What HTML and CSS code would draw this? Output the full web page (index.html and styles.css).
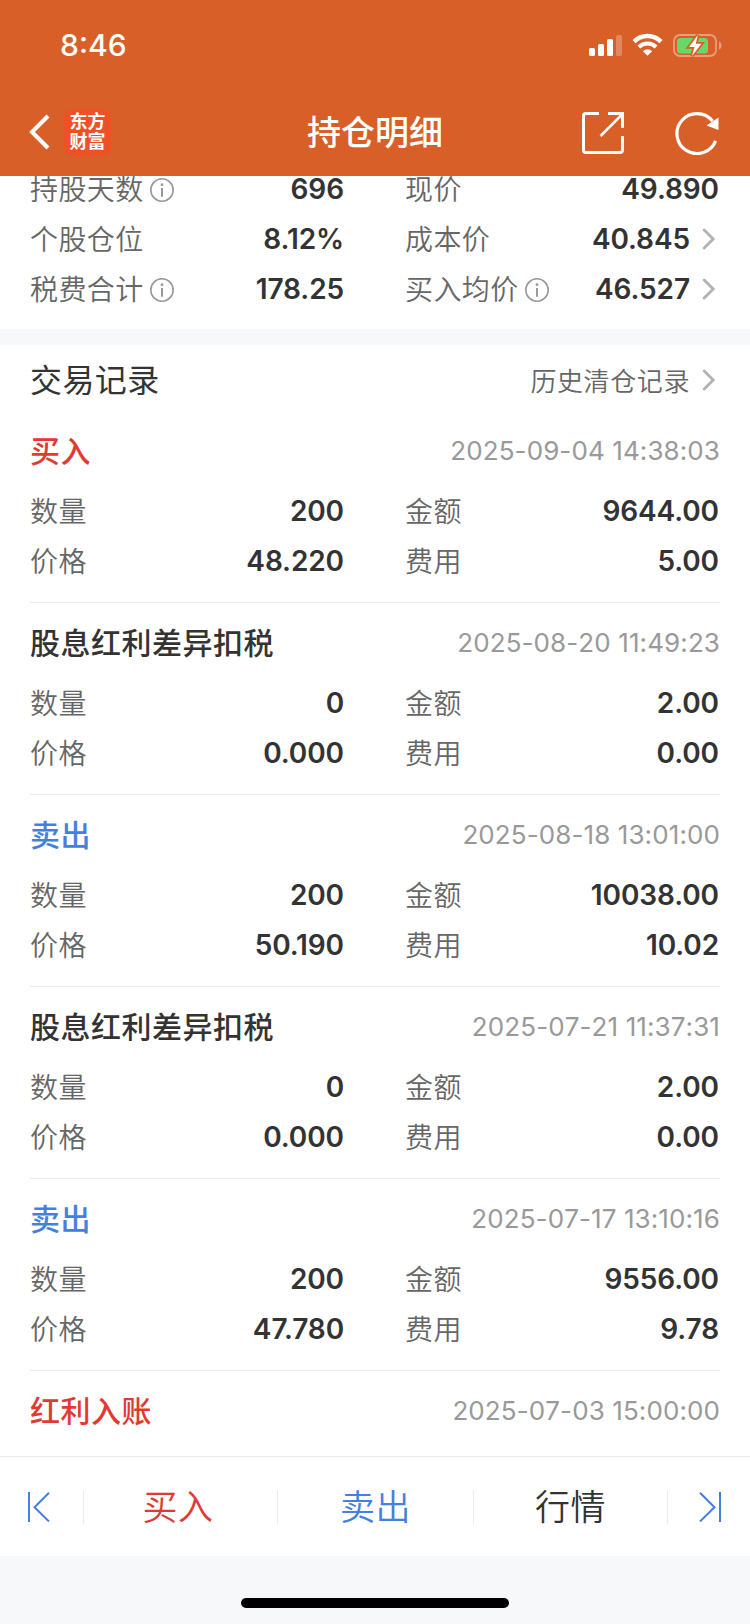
FILE: index.html
```html
<!DOCTYPE html>
<html lang="zh-CN">
<head>
    <meta charset="UTF-8">
    <meta name="viewport" content="width=device-width, initial-scale=1.0">
    <title>持仓明细</title>
    <link rel="stylesheet" href="styles.css">
</head>
<body>
    <svg class="sprite" width="0" height="0">
        <symbol id="info" viewBox="0 0 24 24">
            <circle cx="12" cy="12" r="11.2" fill="none" stroke="#999" stroke-width="1.6"/>
            <path d="M12 10v8.7" stroke="#999" stroke-width="2"/>
            <circle cx="12" cy="6.7" r="1.4" fill="#999"/>
        </symbol>
        <symbol id="arrow" viewBox="0 0 14 22">
            <path d="M2.2 2l9 9-9 9" fill="none" stroke="#b3b3b3" stroke-width="2.9" stroke-linecap="round"/>
        </symbol>
    </svg>

    <header class="header">
        <div class="status">
            <span class="time">8:46</span>
            <svg class="status-icons" width="136" height="26" viewBox="0 0 136 26">
                <g fill="#fff">
                    <rect x="1" y="15" width="6" height="8" rx="1.5"/>
                    <rect x="10" y="11" width="6" height="12" rx="1.5"/>
                    <rect x="19" y="6" width="6" height="17" rx="1.5"/>
                    <rect x="28" y="2" width="6" height="21" rx="1.5" opacity=".25"/>
                </g>
                <g fill="none" stroke="#fff">
                    <path d="M46 8.6a19 19 0 0 1 27 0" stroke-width="4.4"/>
                    <path d="M50.9 14a12.4 12.4 0 0 1 17.2 0" stroke-width="4"/>
                </g>
                <path d="M59.5 22.8l-4.6-4.6a6.7 6.7 0 0 1 9.2 0z" fill="#fff"/>
                <rect x="86" y="2" width="42" height="21" rx="6" fill="none" stroke="#fff" stroke-opacity=".4" stroke-width="1.8"/>
                <path d="M131 8.5c3.3.8 3.3 7.2 0 8z" fill="#fff" opacity=".4"/>
                <rect x="89" y="5" width="31" height="15.5" rx="3.5" fill="#69d86b"/>
                <path d="M109.8 2L101 14h5.500L104 23 113.500 10.800h-5.700z" fill="#fff" stroke="#d85f28" stroke-width="3.500" paint-order="stroke"/>
            </svg>
        </div>
        <div class="navbar">
            <div class="nav-left">
                <svg width="21" height="36" viewBox="0 0 21 36"><path d="M19 2L3 18l16 16" fill="none" stroke="#fff" stroke-width="4"/></svg>
                <div class="app-logo"><span>东方</span><span>财富</span></div>
            </div>
            <h1 class="nav-title">持仓明细</h1>
            <div class="nav-right">
                <svg width="42" height="42" viewBox="0 0 42 42" fill="none" stroke="#fff">
                    <path d="M17 1.5H4Q1.5 1.5 1.5 4V38q0 2.5 2.5 2.5H38q2.500 0 2.500-2.500V24M26 1.500H40.500V16" stroke-width="3"/>
                    <path d="M18.500 24L40 2.500" stroke-width="2.500"/>
                </svg>
                <svg width="44" height="44" viewBox="0 0 44 44">
                    <path d="M40.600 29.800A20 20 0 1 1 37.500 10" fill="none" stroke="#fff" stroke-width="3.200"/>
                    <path d="M43.500 6.500V19L31.500 14.500z" fill="#fff"/>
                </svg>
            </div>
        </div>
    </header>

    <section class="summary">
        <div class="row">
            <div class="cell"><span class="label">持股天数</span><svg class="info"><use href="#info"/></svg><span class="value">696</span></div>
            <div class="cell"><span class="label">现价</span><span class="value">49.890</span></div>
        </div>
        <div class="row">
            <div class="cell"><span class="label">个股仓位</span><span class="value">8.12%</span></div>
            <div class="cell"><span class="label">成本价</span><span class="value">40.845</span><svg class="arrow"><use href="#arrow"/></svg></div>
        </div>
        <div class="row">
            <div class="cell"><span class="label">税费合计</span><svg class="info"><use href="#info"/></svg><span class="value">178.25</span></div>
            <div class="cell"><span class="label">买入均价</span><svg class="info"><use href="#info"/></svg><span class="value">46.527</span><svg class="arrow"><use href="#arrow"/></svg></div>
        </div>
    </section>

    <main class="records">
        <div class="records-head">
            <h2>交易记录</h2>
            <a class="history">历史清仓记录<svg class="arrow"><use href="#arrow"/></svg></a>
        </div>

        <article class="record">
            <div class="record-head"><h3 class="buy">买入</h3><time>2025-09-04 14:38:03</time></div>
            <div class="row">
                <div class="cell"><span class="label">数量</span><span class="value">200</span></div>
                <div class="cell"><span class="label">金额</span><span class="value">9644.00</span></div>
            </div>
            <div class="row">
                <div class="cell"><span class="label">价格</span><span class="value">48.220</span></div>
                <div class="cell"><span class="label">费用</span><span class="value">5.00</span></div>
            </div>
        </article>

        <article class="record">
            <div class="record-head"><h3>股息红利差异扣税</h3><time>2025-08-20 11:49:23</time></div>
            <div class="row">
                <div class="cell"><span class="label">数量</span><span class="value">0</span></div>
                <div class="cell"><span class="label">金额</span><span class="value">2.00</span></div>
            </div>
            <div class="row">
                <div class="cell"><span class="label">价格</span><span class="value">0.000</span></div>
                <div class="cell"><span class="label">费用</span><span class="value">0.00</span></div>
            </div>
        </article>

        <article class="record">
            <div class="record-head"><h3 class="sell">卖出</h3><time>2025-08-18 13:01:00</time></div>
            <div class="row">
                <div class="cell"><span class="label">数量</span><span class="value">200</span></div>
                <div class="cell"><span class="label">金额</span><span class="value">10038.00</span></div>
            </div>
            <div class="row">
                <div class="cell"><span class="label">价格</span><span class="value">50.190</span></div>
                <div class="cell"><span class="label">费用</span><span class="value">10.02</span></div>
            </div>
        </article>

        <article class="record">
            <div class="record-head"><h3>股息红利差异扣税</h3><time>2025-07-21 11:37:31</time></div>
            <div class="row">
                <div class="cell"><span class="label">数量</span><span class="value">0</span></div>
                <div class="cell"><span class="label">金额</span><span class="value">2.00</span></div>
            </div>
            <div class="row">
                <div class="cell"><span class="label">价格</span><span class="value">0.000</span></div>
                <div class="cell"><span class="label">费用</span><span class="value">0.00</span></div>
            </div>
        </article>

        <article class="record">
            <div class="record-head"><h3 class="sell">卖出</h3><time>2025-07-17 13:10:16</time></div>
            <div class="row">
                <div class="cell"><span class="label">数量</span><span class="value">200</span></div>
                <div class="cell"><span class="label">金额</span><span class="value">9556.00</span></div>
            </div>
            <div class="row">
                <div class="cell"><span class="label">价格</span><span class="value">47.780</span></div>
                <div class="cell"><span class="label">费用</span><span class="value">9.78</span></div>
            </div>
        </article>

        <article class="record">
            <div class="record-head"><h3 class="buy">红利入账</h3><time>2025-07-03 15:00:00</time></div>
        </article>
    </main>

    <footer class="footer">
        <nav class="toolbar">
            <a class="step"><svg width="22" height="30" viewBox="0 0 22 30" fill="none" stroke="#4580e0" stroke-width="2"><path d="M1 0v30M21 .7L6.5 15.2 21 29.5"/></svg></a>
            <a class="tab buy">买入</a>
            <a class="tab sell">卖出</a>
            <a class="tab">行情</a>
            <a class="step"><svg width="22" height="30" viewBox="0 0 22 30" fill="none" stroke="#4580e0" stroke-width="2"><path d="M21 0v30M1 .7l14.5 14.5L1 29.5"/></svg></a>
        </nav>
        <div class="home-bar"></div>
    </footer>
</body>
</html>
```
FILE: styles.css
```css
* {
    box-sizing: border-box;
}
body {
    margin: 0;
    width: 750px;
    height: 1624px;
    display: flex;
    flex-direction: column;
    overflow: hidden;
    background-color: #fff;
    color: #333;
    font-family: Inter, "Noto Sans CJK SC", sans-serif;
}
h1, h2, h3 {
    margin: 0;
}
.sprite {
    display: none;
}

/* header */
.header {
    flex: none;
    height: 176px;
    background-color: #d85f28;
    color: #fff;
}
.status {
    display: flex;
    justify-content: space-between;
    height: 90px;
    padding: 26px 26px 0 60px;
}
.time {
    font-size: 30px;
    line-height: 38px;
    font-weight: 550;
}
.status-icons {
    margin-top: 7px;
}
.navbar {
    display: grid;
    grid-template-columns: 200px 1fr 200px;
    align-items: center;
    height: 84px;
    padding: 0 31px 0 29px;
}
.nav-left {
    display: flex;
    align-items: center;
    gap: 14px;
}
.app-logo {
    display: flex;
    flex-direction: column;
    align-items: center;
    justify-content: center;
    width: 47px;
    height: 47px;
    border-radius: 9px;
    background-color: #ef5126;
    font-size: 18px;
    font-weight: 700;
    line-height: 20px;
}
.nav-title {
    padding: 0 0 3px 2px;
    font-size: 34px;
    font-weight: 500;
    text-align: center;
}
.nav-right {
    display: flex;
    align-items: center;
    justify-content: flex-end;
    gap: 51px;
    padding-top: 1px;
}

/* label / value rows */
.row {
    display: grid;
    grid-template-columns: 315px 315px;
    column-gap: 60px;
    height: 50px;
}
.cell {
    display: flex;
    align-items: center;
}
.label {
    padding-bottom: 2px;
    color: #666;
    font-size: 28px;
    font-weight: 350;
    letter-spacing: 0.4px;
}
.value {
    margin: 0 1px 0 auto;
    font-size: 28px;
    font-weight: 600;
    letter-spacing: -0.1px;
}
.info {
    width: 24px;
    height: 24px;
    margin: 2px 0 0 6px;
}
.arrow {
    flex: none;
    width: 14px;
    height: 22px;
    margin: 0 4px 0 11px;
}
.summary {
    flex: none;
    height: 169px;
    padding: 0 30px;
    margin-top: -12px;
    clip-path: inset(12px 0 0 0);
}

/* trade records */
.records {
    flex: 1;
    min-height: 0;
    overflow: hidden;
    padding: 0 30px;
    border-top: 16px solid #f6f8fa;
    margin-top: -4px;
}
.records-head {
    display: flex;
    align-items: center;
    justify-content: space-between;
    height: 66px;
    padding-top: 5px;
}
.records-head h2 {
    padding-bottom: 5px;
    font-size: 32px;
    font-weight: 400;
    letter-spacing: 0.4px;
}
.history {
    display: flex;
    align-items: center;
    margin-top: -2px;
    color: #666;
    font-size: 26px;
    font-weight: 350;
    letter-spacing: 0.6px;
}
.history .arrow {
    margin-left: 12px;
}
.record {
    height: 192px;
    padding-top: 10px;
    border-bottom: 1px solid #ebebeb;
}
.record-head {
    display: flex;
    align-items: center;
    justify-content: space-between;
    height: 65px;
    padding-bottom: 6px;
}
.record-head h3 {
    padding-bottom: 3px;
    font-size: 30px;
    font-weight: 500;
    letter-spacing: 0.5px;
}
.record-head time {
    color: #999;
    font-size: 26px;
    font-kerning: none;
    letter-spacing: 0.1px;
}
.buy, .record-head .buy {
    color: #e13a33;
}
.sell, .record-head .sell {
    color: #4580e0;
}

/* bottom bar */
.footer {
    flex: none;
    height: 168px;
    background-color: #f6f8fa;
}
.toolbar {
    display: grid;
    grid-template-columns: 83px 194px 196px 194px 83px;
    align-items: center;
    height: 100px;
    background-color: #fff;
    border-top: 1px solid #ebebeb;
}
.toolbar a {
    display: flex;
    align-items: center;
    justify-content: center;
    height: 34px;
}
.toolbar a + a {
    border-left: 1px solid #ebebeb;
}
.toolbar .step {
    padding-right: 5px;
}
.toolbar .step:last-child {
    padding: 0 0 0 2px;
}
.toolbar .tab {
    padding-bottom: 5px;
    font-size: 35px;
    font-weight: 350;
    letter-spacing: 0.5px;
}
.toolbar .buy {
    padding-right: 5px;
}
.home-bar {
    width: 268px;
    height: 10px;
    margin: 42px auto 0;
    border-radius: 5px;
    background-color: #000;
}
```
